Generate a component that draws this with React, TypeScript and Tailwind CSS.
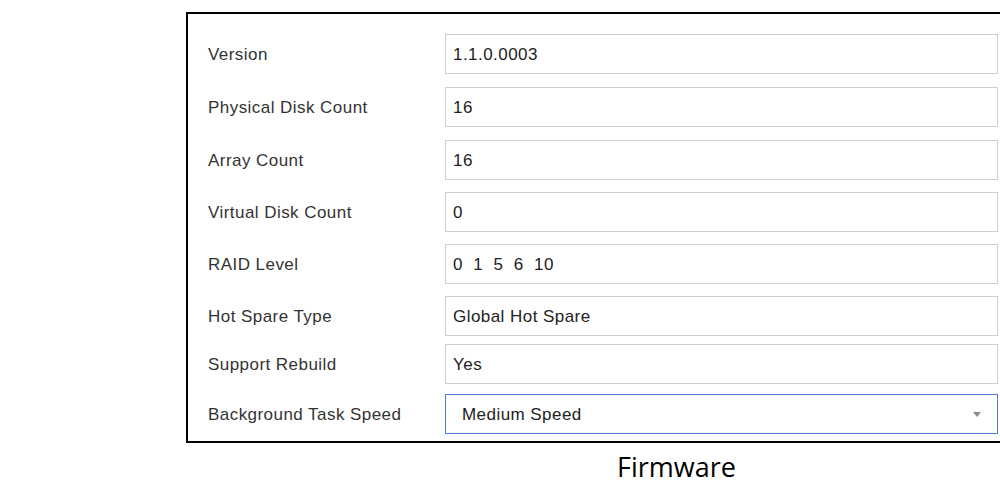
const rows: { label: string; value: string; gap: string }[] = [
  { label: "Version", value: "1.1.0.0003", gap: "mt-0" },
  { label: "Physical Disk Count", value: "16", gap: "mt-[13px]" },
  { label: "Array Count", value: "16", gap: "mt-[13px]" },
  { label: "Virtual Disk Count", value: "0", gap: "mt-[12px]" },
  { label: "RAID Level", value: "0  1  5  6  10", gap: "mt-[12px]" },
  { label: "Hot Spare Type", value: "Global Hot Spare", gap: "mt-[12px]" },
  { label: "Support Rebuild", value: "Yes", gap: "mt-[8px]" },
];

export default function App() {
  return (
    <div className="w-[1000px] h-[490px] bg-white overflow-hidden font-['Liberation_Sans',Arial,sans-serif] text-[17px] tracking-[0.45px] text-[#333]">
      <div className="ml-[186px] mt-[12px] w-[830px] h-[431px] border-2 border-r-0 border-black pt-[20px]">
        {rows.map((r) => (
          <div key={r.label} className={`flex items-center h-[40px] ${r.gap}`}>
            <span className="w-[257px] pl-[20px] pt-[1px]">{r.label}</span>
            <div className="w-[553px] h-[40px] border border-[#cfcfcf] flex items-center pl-[7px] pt-[1px] text-[#222] whitespace-pre">
              {r.value}
            </div>
          </div>
        ))}
        <div className="flex items-center h-[40px] mt-[10px]">
          <span className="w-[257px] pl-[20px] pt-[1px]">Background Task Speed</span>
          <div className="w-[553px] h-[40px] border border-[#4a7fd4] flex items-center justify-between pl-[16px] pr-[16px] pt-[1px] text-[#222]">
            <span>Medium Speed</span>
            <span className="w-0 h-0 border-l-[4px] border-r-[4px] border-t-[5px] border-l-transparent border-r-transparent border-t-[#8a8a8a]" />
          </div>
        </div>
      </div>
      <div className="ml-[617px] mt-[6px] font-['Open_Sans',sans-serif] text-[27px] leading-[36px] tracking-normal text-black">
        Firmware
      </div>
    </div>
  );
}
